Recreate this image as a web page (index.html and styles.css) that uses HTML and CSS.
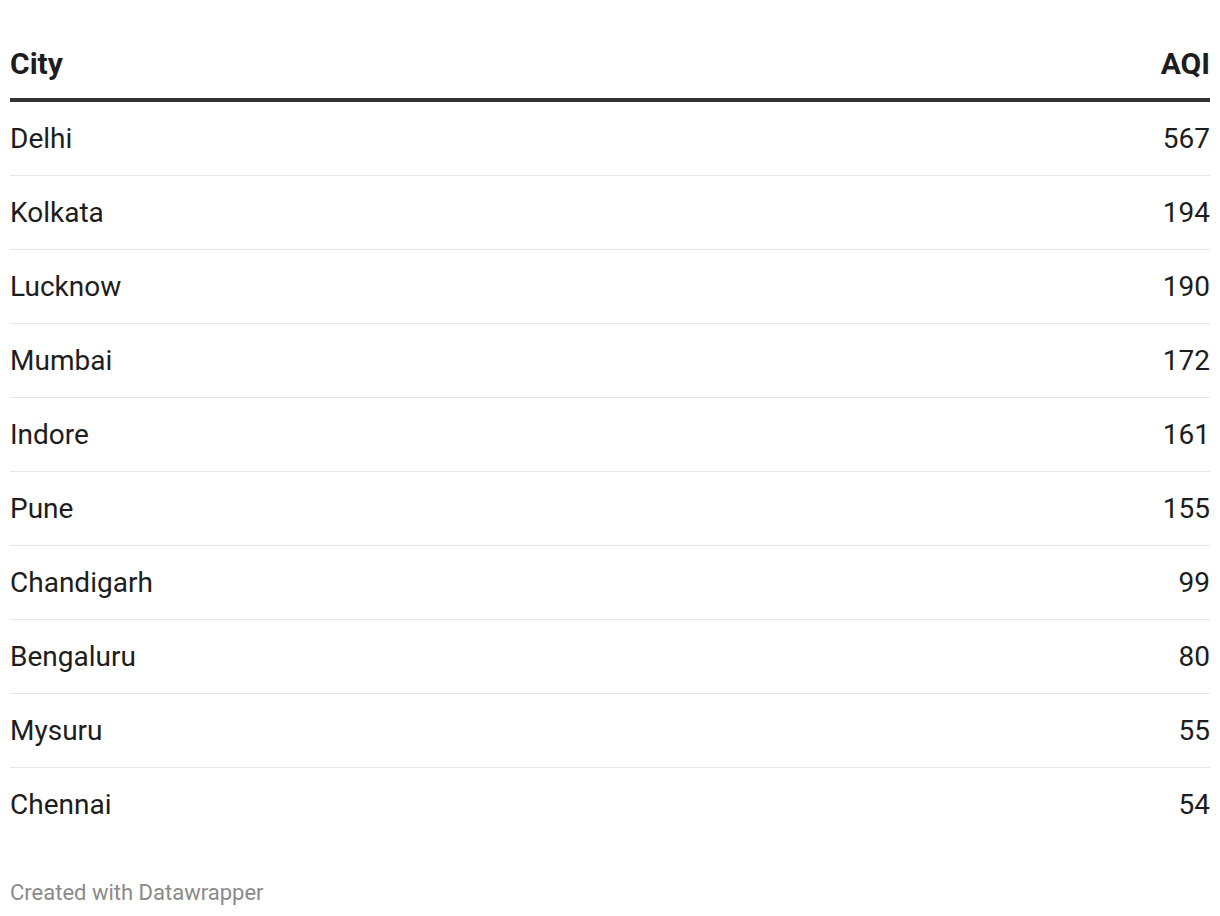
FILE: index.html
```
<!DOCTYPE html>
<html>
<head>
<meta charset="utf-8">
<link rel="stylesheet" href="styles.css">
</head>
<body>
<div class="chart">
  <table class="table">
    <thead>
      <tr><th class="col-city">City</th><th class="col-aqi">AQI</th></tr>
    </thead>
    <tbody>
      <tr><td class="col-city">Delhi</td><td class="col-aqi">567</td></tr>
      <tr><td class="col-city">Kolkata</td><td class="col-aqi">194</td></tr>
      <tr><td class="col-city">Lucknow</td><td class="col-aqi">190</td></tr>
      <tr><td class="col-city">Mumbai</td><td class="col-aqi">172</td></tr>
      <tr><td class="col-city">Indore</td><td class="col-aqi">161</td></tr>
      <tr><td class="col-city">Pune</td><td class="col-aqi">155</td></tr>
      <tr><td class="col-city">Chandigarh</td><td class="col-aqi">99</td></tr>
      <tr><td class="col-city">Bengaluru</td><td class="col-aqi">80</td></tr>
      <tr><td class="col-city">Mysuru</td><td class="col-aqi">55</td></tr>
      <tr><td class="col-city">Chennai</td><td class="col-aqi">54</td></tr>
    </tbody>
  </table>
  <div class="footer">Created with Datawrapper</div>
</div>
</body>
</html>
```
FILE: styles.css
```
html, body {
  margin: 0;
  padding: 0;
  background: #ffffff;
}
body {
  font-family: Roboto, "Liberation Sans", sans-serif;
  color: #1d1d1d;
}
.chart {
  padding: 0 10px;
}
.table {
  width: 100%;
  border-collapse: collapse;
}
.table th {
  font-size: 30px;
  font-weight: 700;
  line-height: 36px;
  padding: 46px 0 16px 0;
  border-bottom: 4px solid #333333;
  color: #1d1d1d;
}
.table td {
  font-size: 28px;
  font-weight: 400;
  line-height: 36px;
  padding: 19px 0 18px 0;
  border-bottom: 1px solid #e6e6e6;
}
.table tbody tr:last-child td {
  border-bottom: none;
}
.col-city {
  text-align: left;
}
.col-aqi {
  text-align: right;
}
.footer {
  margin-top: 38px;
  font-size: 22px;
  line-height: 28px;
  color: #8a8a8a;
}
```
